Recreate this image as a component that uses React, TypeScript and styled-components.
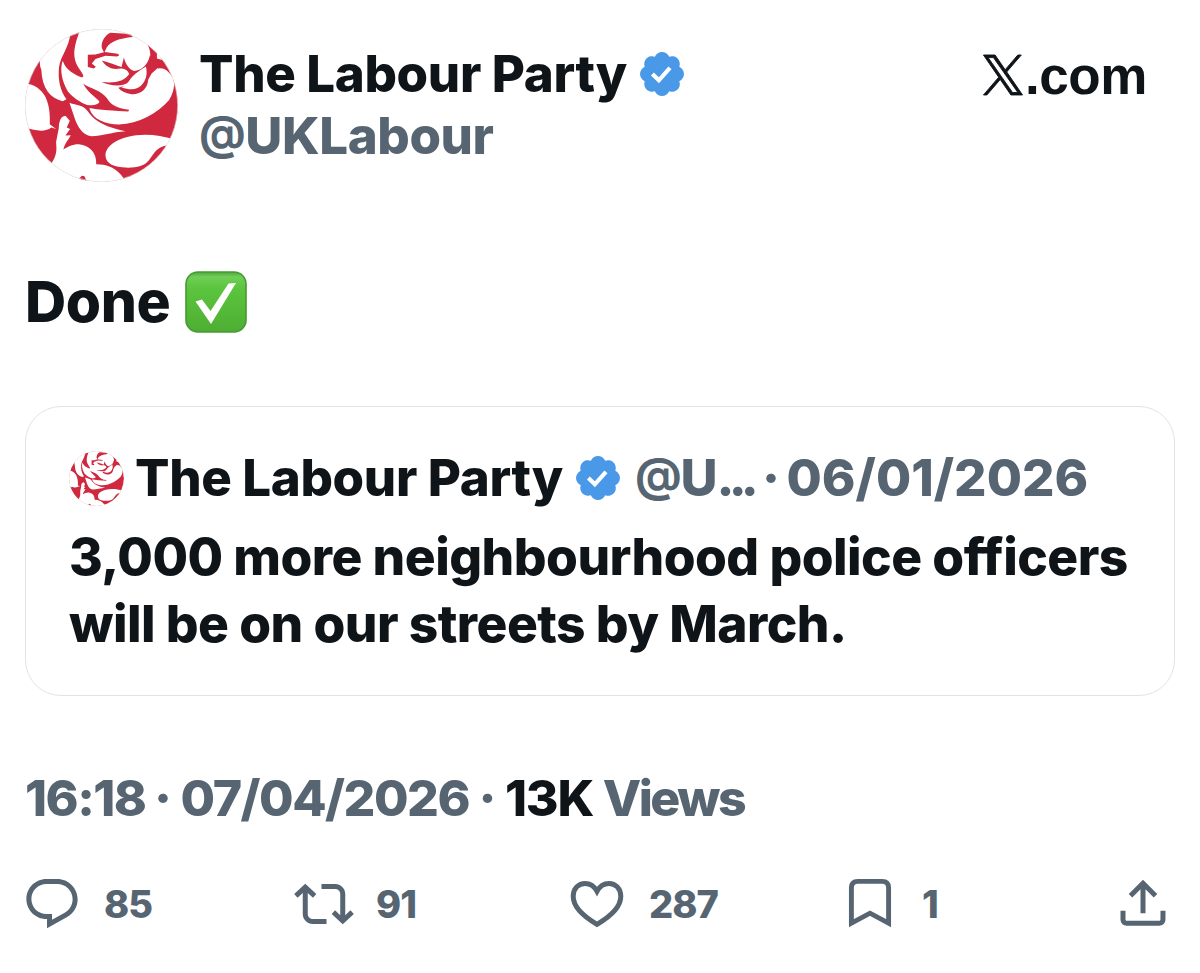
import React from "react";
import styled, { createGlobalStyle } from "styled-components";

const ink = "#0f1419";
const slate = "#566571";

const GlobalStyle = createGlobalStyle`
  body { margin: 0; background: #fff; }
  * { box-sizing: border-box; }
`;

const Post = styled.article`
  width: 1200px;
  height: 973px;
  padding: 29px 25px 0;
  display: flex;
  flex-direction: column;
  background: #fff;
  color: ${ink};
  font-family: Inter, "Liberation Sans", sans-serif;
  font-weight: 800;
  white-space: nowrap;
  overflow: hidden;
`;

const Header = styled.header`
  display: flex;
  height: 153px;
`;

const AvatarSvg = styled.svg<{ $size: number }>`
  display: block;
  flex: none;
  width: ${(p) => p.$size}px;
  height: ${(p) => p.$size}px;
  border-radius: 50%;
`;

const Names = styled.div`
  margin-left: 21px;
  padding-top: 14px;
`;

const NameRow = styled.div`
  display: flex;
  align-items: center;
  height: 62px;
`;

const Label = styled.span<{ $spacing: number; $muted?: boolean; $gap?: number; $size?: number }>`
  font-size: ${(p) => p.$size ?? 51}px;
  line-height: 62px;
  letter-spacing: ${(p) => p.$spacing}px;
  margin-left: ${(p) => p.$gap ?? 0}px;
  color: ${(p) => (p.$muted ? slate : "inherit")};
`;

const At = styled.span`
  display: inline-block;
  font-size: 46px;
  line-height: 1;
  font-weight: 700;
  transform: translateY(-5px);
`;

const BadgeSvg = styled.svg<{ $gap: number }>`
  display: block;
  flex: none;
  width: 44px;
  height: 44px;
  margin-left: ${(p) => p.$gap}px;
`;

const Site = styled.div`
  display: flex;
  align-items: flex-start;
  margin-left: auto;
  margin-right: 28px;
  padding-top: 26px;
`;

const XLogo = styled.svg`
  display: block;
  width: 40px;
  height: 40px;
  margin-right: 1.5px;
  overflow: visible;
`;

const SiteText = styled.span`
  font: bold 53px/60px "Liberation Sans", Arial, sans-serif;
  letter-spacing: -0.4px;
  margin-top: -9px;
`;

const Body = styled.div`
  display: flex;
  align-items: center;
  height: 62px;
  margin-top: 89px;
  font-size: 57px;
  line-height: 62px;
`;

const BodyText = styled.span`
  width: 160px;
  letter-spacing: -0.4px;
`;

const CheckEmoji = styled.svg`
  display: block;
  width: 62px;
  height: 62px;
`;

const Quote = styled.section`
  height: 290px;
  margin-top: 73px;
  padding: 40px 43px 0;
  border: 1.5px solid #e1e4e6;
  border-radius: 36px;
`;

const QuoteText = styled.p<{ $spacing: number }>`
  margin: 0;
  font-size: 51.5px;
  line-height: 67px;
  letter-spacing: ${(p) => p.$spacing}px;
`;

const QuoteLines = styled.div`
  margin-top: 14px;
`;

const Ellipsis = styled.span`
  letter-spacing: -5.8px;
`;

const Meta = styled.div`
  display: flex;
  margin-top: 71px;
  height: 62px;
`;

const Actions = styled.footer`
  display: flex;
  align-items: center;
  height: 60px;
  margin-top: 45px;
`;

const Action = styled.div<{ $width: number; $gap: number }>`
  display: flex;
  align-items: center;
  width: ${(p) => p.$width}px;
  gap: ${(p) => p.$gap}px;
  color: ${slate};
  font-size: 38px;
  line-height: 60px;
  letter-spacing: -1px;
`;

const Icon = styled.svg<{ $shift?: number }>`
  display: block;
  flex: none;
  width: 60px;
  height: 60px;
  margin-left: ${(p) => p.$shift ?? 0}px;
  fill: currentColor;
`;

function Rose({ size }: { size: number }) {
  return (
    <AvatarSvg $size={size} viewBox="29 27 458 458" aria-label="Red rose">
      <circle cx="258" cy="256" r="229" fill="#d0283f" />
      <g fill="#fff">
        <path d="M165 40C100 60 60 100 78 150C80 205 105 236 142 243L153 237C133 210 127 175 131 140C137 105 160 85 165 40Z" />
        <path d="M20 190C55 190 75 205 90 230C104 260 104 290 103 312L122 326L108 322C90 336 60 334 20 318Z" />
        <path d="M196 20C186 55 174 80 177 110C181 140 198 150 204 168L200 172C180 165 150 150 142 122C132 150 140 185 158 215C180 240 205 252 225 258L222 266C232 298 270 313 310 313C370 310 425 280 460 240C475 215 480 190 470 170C455 150 445 142 428 145L400 130L404 108C405 85 395 65 372 50L350 44L300 20Z" />
        <path d="M162 248C190 250 210 262 222 280C240 305 275 322 330 333C290 335 260 348 228 348C200 345 186 318 178 295Z" />
        <path d="M270 400C275 375 300 360 335 350C380 338 430 343 475 357L455 376C425 378 415 400 400 420C385 440 350 445 320 441C285 438 268 425 270 400Z" />
        <path d="M150 287C137 289 131 300 130 325L122 365C124 390 125 405 106 432L110 495L330 495L325 475C305 445 280 432 242 432C244 400 225 375 190 372C170 372 155 380 144 388C148 368 160 358 166 345L150 346L164 326L154 322L163 302Z" />
        <path d="M424 88L440 120L424 115Z" />
      </g>
      <g fill="#d0283f">
        <path d="M203 190C225 207 255 208 275 235C285 255 310 266 341 269L338 274C300 272 250 270 218 263L160 248L185 246C215 260 248 258 252 244C240 230 215 215 203 190Z" />
        <path d="M284 38C262 50 257 70 259 84L266 98L274 82C285 65 310 55 352 51L345 42Z" />
        <path d="M217 104L240 103L268 96L306 101C313 104 311 108 304 109L270 107L240 117L229 130L241 140L235 145L217 141Z" />
        <path d="M259 121C277 126 292 131 318 141L325 112C330 132 340 147 356 153C378 149 395 138 403 106L428 118L428 142L408 160L398 178C396 210 370 224 348 222C330 220 318 214 308 203C325 198 333 198 342 185C325 199 290 200 258 186C300 190 326 184 341 162C335 145 318 143 301 147C285 145 270 139 259 121Z" />
        <path d="M191 475L199 466L207 468L213 482L195 482Z" />
      </g>
      <path
        fill="#fff"
        d="M391 139C376 149 356 160 345 176C337 190 328 197 318 202C345 211 365 208 375 198C390 183 397 165 391 139Z"
      />
      <circle cx="258" cy="256" r="228" fill="none" stroke="#e6e6e6" strokeWidth="2" />
    </AvatarSvg>
  );
}

function Verified({ gap }: { gap: number }) {
  return (
    <BadgeSvg $gap={gap} viewBox="1.604 1.604 18.792 18.792" aria-label="Verified account">
      <path
        fill="#4a99e9"
        d="M20.396 11c-.018-.646-.215-1.275-.57-1.816-.354-.54-.852-.972-1.438-1.246.223-.607.27-1.264.14-1.897-.131-.634-.437-1.218-.882-1.687-.47-.445-1.053-.75-1.687-.882-.633-.13-1.29-.083-1.897.14-.273-.587-.704-1.086-1.245-1.44S11.647 1.62 11 1.604c-.646.017-1.273.213-1.813.568s-.969.854-1.24 1.44c-.608-.223-1.267-.272-1.902-.14-.635.13-1.22.436-1.69.882-.445.47-.749 1.055-.878 1.688-.13.633-.08 1.29.144 1.896-.587.274-1.087.705-1.443 1.245-.356.54-.555 1.17-.574 1.817.02.647.218 1.276.574 1.817.356.54.856.972 1.443 1.245-.224.606-.274 1.263-.144 1.896.13.634.433 1.218.877 1.688.47.443 1.054.747 1.687.878.633.132 1.29.084 1.897-.136.274.586.705 1.084 1.246 1.439.54.354 1.17.551 1.816.569.647-.016 1.276-.213 1.817-.567s.972-.854 1.245-1.44c.604.239 1.266.296 1.903.164.636-.132 1.22-.447 1.68-.907.46-.46.776-1.044.908-1.681s.075-1.299-.165-1.903c.586-.274 1.084-.705 1.439-1.246.354-.54.551-1.17.569-1.816z"
      />
      <path d="M6.9 11l2.75 2.7 4.75-5.35" fill="none" stroke="#fff" strokeWidth="1.75" />
    </BadgeSvg>
  );
}

export default function App() {
  return (
    <>
      <GlobalStyle />
      <Post>
        <Header>
          <Rose size={153} />
          <Names>
            <NameRow>
              <Label $spacing={-0.35}>The Labour Party</Label>
              <Verified gap={13} />
            </NameRow>
            <NameRow>
              <Label $spacing={-0.4} $muted>
                <At>@</At>UKLabour
              </Label>
            </NameRow>
          </Names>
          <Site>
            <XLogo viewBox="0 0 1200 1227" fill={ink} stroke={ink} strokeWidth="28" aria-label="X">
              <path d="M714.163 519.284L1160.89 0H1055.03L667.137 450.887L357.328 0H0L468.492 681.821L0 1226.37H105.866L515.491 750.218L842.672 1226.37H1200L714.137 519.284H714.163ZM569.165 687.828L521.697 619.934L144.011 79.6944H306.615L611.412 515.685L658.88 583.579L1055.08 1150.3H892.476L569.165 687.854V687.828Z" />
            </XLogo>
            <SiteText>.com</SiteText>
          </Site>
        </Header>

        <Body>
          <BodyText>Done</BodyText>
          <CheckEmoji viewBox="0 0 62 62" aria-label="Check mark">
            <defs>
              <linearGradient id="tile" x1="0" y1="0" x2="0" y2="1">
                <stop offset="0" stopColor="#4fa63a" />
                <stop offset="0.08" stopColor="#6fce57" />
                <stop offset="0.28" stopColor="#5bc43d" />
                <stop offset="1" stopColor="#4eae33" />
              </linearGradient>
            </defs>
            <rect x="1" y="1" width="60" height="60" rx="12" fill="url(#tile)" stroke="#459a33" strokeWidth="1.6" />
            <path d="M10.5 30.5L17 28.5L25.5 40L43.5 12.5L51 12L26 53Z" fill="#fff" />
          </CheckEmoji>
        </Body>

        <Quote>
          <NameRow>
            <Rose size={55} />
            <Label $spacing={-0.35} $gap={11}>
              The Labour Party
            </Label>
            <Verified gap={13} />
            <Label $spacing={-1.2} $muted $gap={15}>
              <At>@</At>U<Ellipsis>...</Ellipsis>
            </Label>
            <Label $spacing={0} $muted $gap={9}>
              ·
            </Label>
            <Label $spacing={0} $muted $gap={6.5}>
              06/01/2026
            </Label>
          </NameRow>
          <QuoteLines>
            <QuoteText $spacing={-0.54}>3,000 more neighbourhood police officers</QuoteText>
            <QuoteText $spacing={-0.54}>will be on our streets by March.</QuoteText>
          </QuoteLines>
        </Quote>

        <Meta>
          <Label $size={50} $spacing={-1.5} $muted>
            16:18
          </Label>
          <Label $spacing={0} $muted $gap={8.5}>
            ·
          </Label>
          <Label $size={50} $spacing={-1.5} $muted $gap={8.5}>
            07/04/2026
          </Label>
          <Label $spacing={0} $muted $gap={9.5}>
            ·
          </Label>
          <Label $size={50} $spacing={-1.2} $gap={8.5}>
            13K
          </Label>
          <Label $size={50} $spacing={-2.5} $muted $gap={9.5}>
            Views
          </Label>
        </Meta>

        <Actions>
          <Action $width={269} $gap={22}>
            <Icon viewBox="0 0 24 24" $shift={-3} aria-label="Replies">
              <path d="M1.751 10c0-4.42 3.584-8 8.005-8h4.366c4.49 0 8.129 3.64 8.129 8.13 0 2.96-1.607 5.68-4.196 7.11l-8.054 4.46v-3.69h-.067c-4.49.1-8.183-3.51-8.183-8.01zm8.005-6c-3.317 0-6.005 2.69-6.005 6 0 3.37 2.77 6.08 6.138 6.01l.351-.01h1.761v2.3l5.087-2.81c1.951-1.08 3.163-3.13 3.163-5.36 0-3.39-2.744-6.13-6.129-6.13H9.756z" />
            </Icon>
            85
          </Action>
          <Action $width={276} $gap={22}>
            <Icon viewBox="0 0 24 24" aria-label="Reposts">
              <path d="M4.5 3.88l4.432 4.14-1.364 1.46L5.5 7.55V16c0 1.1.896 2 2 2H13v2H7.5c-2.209 0-4-1.79-4-4V7.55L1.432 9.48.068 8.02 4.5 3.88zM16.5 6H11V4h5.5c2.209 0 4 1.79 4 4v8.45l2.068-1.93 1.364 1.46-4.432 4.14-4.432-4.14 1.364-1.46 2.068 1.93V8c0-1.1-.896-2-2-2z" />
            </Icon>
            91
          </Action>
          <Action $width={270} $gap={22}>
            <Icon viewBox="0 0 60 60" $shift={-3} aria-label="Likes">
              <path
                d="M30 50.3C15 41.6 6.2 32.5 6.2 22.3C6.2 14.4 11.6 9.4 18 9.4C23 9.4 27.2 12 30 17.2C32.8 12 37 9.4 42 9.4C48.4 9.4 53.8 14.4 53.8 22.3C53.8 32.5 45 41.6 30 50.3Z"
                fill="none"
                stroke="currentColor"
                strokeWidth="5"
              />
            </Icon>
            287
          </Action>
          <Action $width={273} $gap={22}>
            <Icon viewBox="0 0 60 60" aria-label="Bookmarks">
              <path
                d="M11.4 49.2V13.8Q11.4 7.4 17.8 7.4H42.2Q48.6 7.4 48.6 13.8V49.2L30 39.2Z"
                fill="none"
                stroke="currentColor"
                strokeWidth="4.9"
              />
            </Icon>
            1
          </Action>
          <Action $width={60} $gap={0}>
            <Icon viewBox="0 0.3 24 24" aria-label="Share">
              <path d="M12 2.59l5.7 5.7-1.41 1.42L13 6.41V16h-2V6.41l-3.3 3.3-1.41-1.42L12 2.59zM21 15l-.02 3.51c0 1.38-1.12 2.49-2.5 2.49H5.5C4.11 21 3 19.88 3 18.5V15h2v3.5c0 .28.22.5.5.5h12.98c.28 0 .5-.22.5-.5L19 15h2z" />
            </Icon>
          </Action>
        </Actions>
      </Post>
    </>
  );
}
